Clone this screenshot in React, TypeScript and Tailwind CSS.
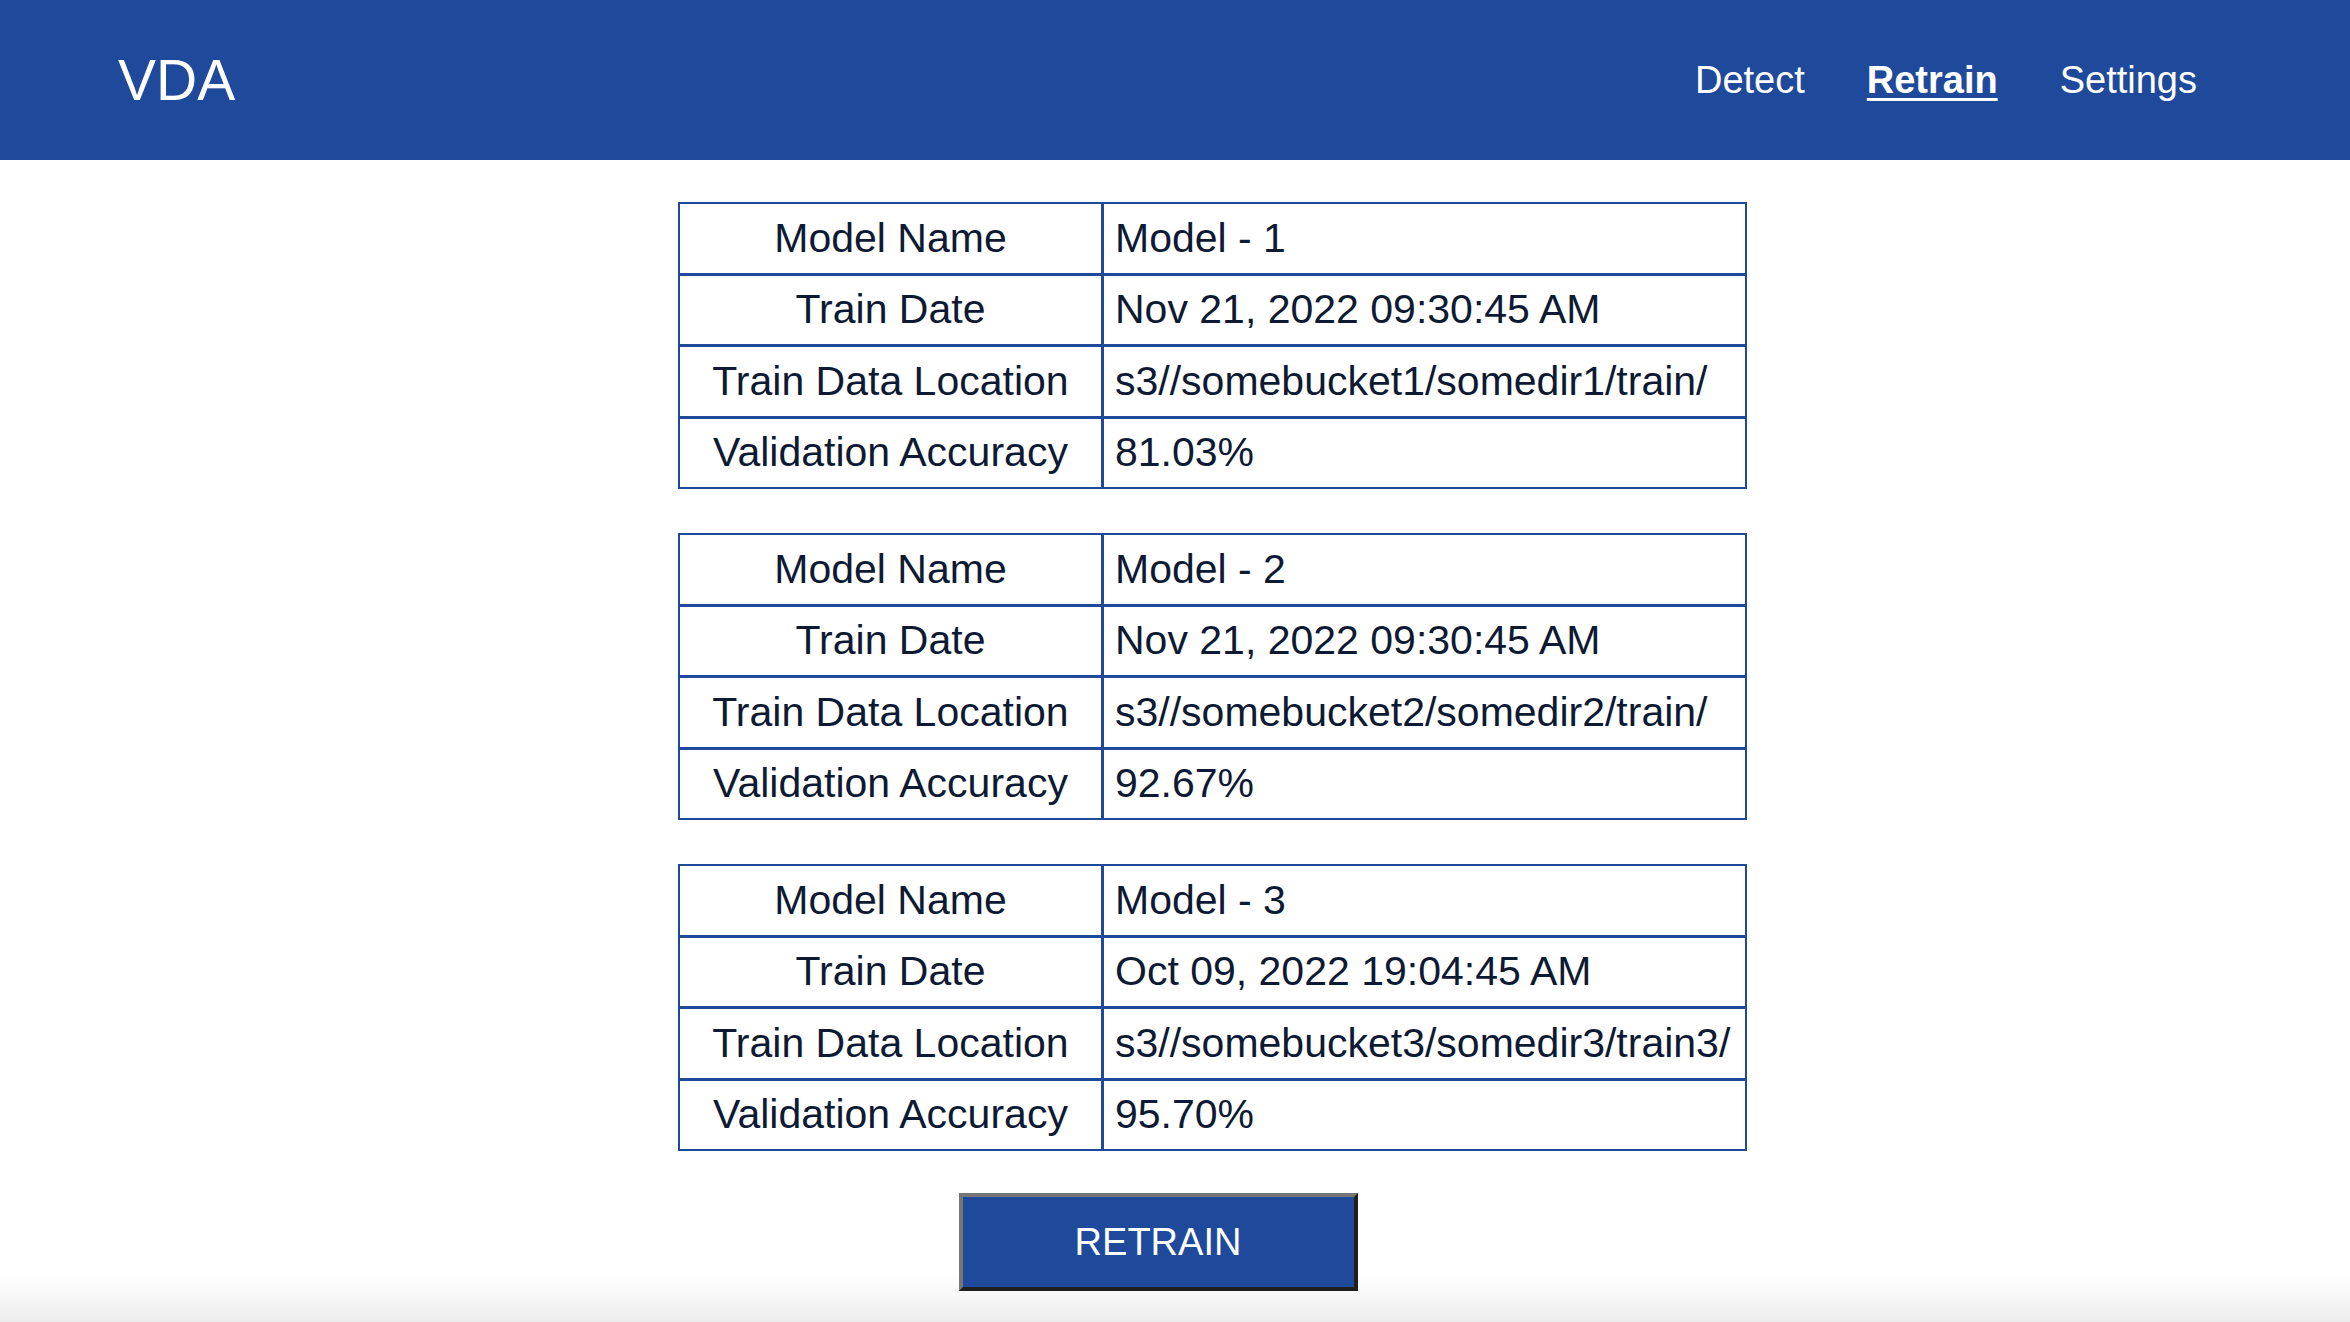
const models = [
  {
    name: 'Model - 1',
    date: 'Nov 21, 2022 09:30:45 AM',
    location: 's3//somebucket1/somedir1/train/',
    accuracy: '81.03%',
  },
  {
    name: 'Model - 2',
    date: 'Nov 21, 2022 09:30:45 AM',
    location: 's3//somebucket2/somedir2/train/',
    accuracy: '92.67%',
  },
  {
    name: 'Model - 3',
    date: 'Oct 09, 2022 19:04:45 AM',
    location: 's3//somebucket3/somedir3/train3/',
    accuracy: '95.70%',
  },
];

type Model = (typeof models)[number];

function ModelTable({ model }: { model: Model }) {
  const rows = [
    ['Model Name', model.name],
    ['Train Date', model.date],
    ['Train Data Location', model.location],
    ['Validation Accuracy', model.accuracy],
  ];

  return (
    <div className="ml-[75px] w-[1069px] border-2 border-[#1f4a9c] bg-white">
      {rows.map(([label, value], i) => (
        <div
          key={label}
          className={
            i > 0
              ? 'grid h-[71.5px] grid-cols-[421px_1fr] border-t-[3px] border-[#1f4a9c]'
              : 'grid h-[68.5px] grid-cols-[421px_1fr]'
          }
        >
          <div className="flex items-center justify-center whitespace-nowrap text-[41px] text-[#0e1a33]">
            {label}
          </div>
          <div className="flex items-center whitespace-nowrap border-l-[3px] border-[#1f4a9c] pl-[11px] text-[41px] text-[#0e1a33]">
            {value}
          </div>
        </div>
      ))}
    </div>
  );
}

export default function App() {
  return (
    <div
      className="min-h-screen bg-[linear-gradient(to_bottom,#ffffff_96.5%,#ececec)]"
      style={{ fontFamily: '"Liberation Sans", Arial, sans-serif' }}
    >
      <header className="flex h-[160px] items-center justify-between bg-[#1f4a9c] pl-[118px] pr-[153px] text-white">
        <div className="text-[57px] leading-none">VDA</div>
        <nav className="flex items-center gap-[62px] text-[38px] leading-none">
          <a className="cursor-pointer">Detect</a>
          <a className="cursor-pointer font-bold underline underline-offset-[5px] decoration-[3px]">Retrain</a>
          <a className="cursor-pointer">Settings</a>
        </nav>
      </header>

      <main className="flex flex-col items-center gap-[44px] pt-[42px]">
        {models.map((m) => (
          <ModelTable key={m.name} model={m} />
        ))}
        <button className="-mt-[2px] mr-[34px] h-[98px] w-[399px] border-4 border-t-[#767676] border-l-[#767676] border-b-[#1f1f1f] border-r-[#1f1f1f] bg-[#1f4a9c] text-[38px] text-white">
          RETRAIN
        </button>
      </main>
    </div>
  );
}
